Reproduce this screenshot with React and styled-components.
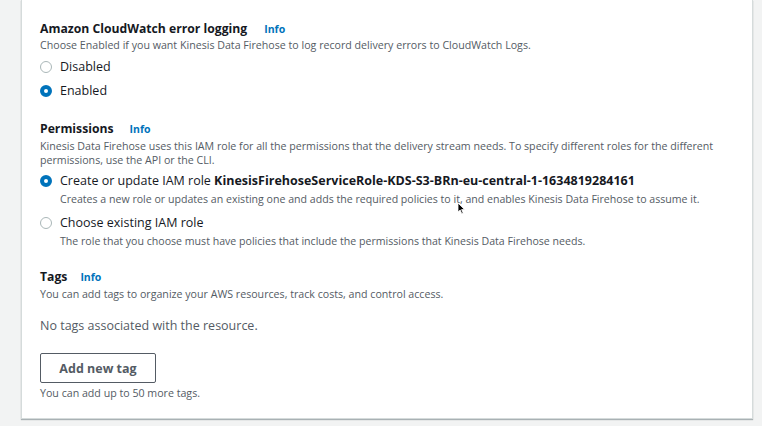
import React from 'react'
import styled, { createGlobalStyle } from 'styled-components'

const GlobalStyle = createGlobalStyle`
  html, body {
    margin: 0;
    padding: 0;
    background: #f2f3f3;
    font-family: "Open Sans", "Noto Sans", sans-serif;
    -webkit-font-smoothing: antialiased;
  }
`

const Page = styled.div`
  width: 762px;
  height: 426px;
  overflow: hidden;
  padding: 0 9px 0 21px;
  box-sizing: border-box;
  position: relative;
`

const Card = styled.div`
  background: #fff;
  border: 1px solid #d5dbdb;
  border-top: none;
  box-shadow: 0 1px 1px 0 rgba(0, 28, 36, 0.3);
  padding: 21px 18px 18px 18px;
  display: flex;
  flex-direction: column;
`

const Section = styled.section`
  display: flex;
  flex-direction: column;
  margin-top: ${p => p.$top || 0}px;
`

const Heading = styled.div`
  display: flex;
  align-items: baseline;
  font-size: 12.2px;
  line-height: 16px;
  font-weight: 700;
  color: #16191f;
`

const Info = styled.span`
  font-size: 10.5px;
  font-weight: 700;
  color: #0073bb;
  margin-left: ${p => p.$gap || 16}px;
`

const Description = styled.p`
  margin: ${p => p.$top || 1}px 0 0 0;
  font-size: 10.65px;
  line-height: 14px;
  color: #545b64;
`

const RadioGroup = styled.div`
  display: flex;
  flex-direction: column;
  gap: ${p => p.$gap || 3}px;
  margin-top: 5px;
`

const RadioRow = styled.label`
  display: grid;
  grid-template-columns: 12px 1fr;
  column-gap: 8px;
  align-items: center;
`

const Dot = styled.span`
  width: 12px;
  height: 12px;
  box-sizing: border-box;
  border-radius: 50%;
  background: #fff;
  border: ${p => (p.$checked ? '4px solid #0073bb' : '1px solid #aab7b8')};
`

const RadioLabel = styled.span`
  font-size: 12.5px;
  line-height: ${p => p.$lh || 20}px;
  color: #16191f;

  b {
    font-weight: 700;
  }
`

const RadioSub = styled.span`
  grid-column: 2;
  font-size: 10.6px;
  line-height: 14px;
  color: #545b64;
  margin-top: 2px;
`

const Empty = styled.p`
  margin: 16px 0 0 0;
  font-size: 12.5px;
  line-height: 18px;
  color: #545b64;
`

const Button = styled.button`
  align-self: flex-start;
  margin-top: 18px;
  width: 116px;
  height: 30px;
  background: #fff;
  border: 1px solid #545b64;
  border-radius: 2px;
  font-family: inherit;
  font-size: 12.5px;
  font-weight: 700;
  color: #545b64;
  padding: 0;
`

const Note = styled.p`
  margin: 3px 0 0 0;
  font-size: 10.65px;
  line-height: 14px;
  color: #545b64;
`

const Cursor = styled.svg`
  position: absolute;
  left: 457px;
  top: 202px;
`

const Radio = ({ checked, label, sub, lh }) => (
  <RadioRow>
    <Dot $checked={checked} />
    <RadioLabel $lh={lh}>{label}</RadioLabel>
    {sub && <RadioSub>{sub}</RadioSub>}
  </RadioRow>
)

export default function App() {
  return (
    <>
      <GlobalStyle />
      <Page>
        <Card>
          <Section>
            <Heading>
              Amazon CloudWatch error logging
              <Info $gap={17}>Info</Info>
            </Heading>
            <Description>
              Choose Enabled if you want Kinesis Data Firehose to log record delivery errors to CloudWatch Logs.
            </Description>
            <RadioGroup $gap={4}>
              <Radio label="Disabled" />
              <Radio checked label="Enabled" />
            </RadioGroup>
          </Section>

          <Section $top={20}>
            <Heading>
              Permissions
              <Info $gap={16}>Info</Info>
            </Heading>
            <Description $top={2}>
              Kinesis Data Firehose uses this IAM role for all the permissions that the delivery stream needs. To specify different roles for the different permissions, use the API or the CLI.
            </Description>
            <RadioGroup $gap={8}>
              <Radio
                checked
                lh={18}
                label={<>Create or update IAM role <b>KinesisFirehoseServiceRole-KDS-S3-BRn-eu-central-1-1634819284161</b></>}
                sub="Creates a new role or updates an existing one and adds the required policies to it, and enables Kinesis Data Firehose to assume it."
              />
              <Radio
                lh={18}
                label="Choose existing IAM role"
                sub="The role that you choose must have policies that include the permissions that Kinesis Data Firehose needs."
              />
            </RadioGroup>
          </Section>

          <Section $top={21}>
            <Heading>
              Tags
              <Info $gap={13}>Info</Info>
            </Heading>
            <Description $top={2}>
              You can add tags to organize your AWS resources, track costs, and control access.
            </Description>
            <Empty>No tags associated with the resource.</Empty>
            <Button>Add new tag</Button>
            <Note>You can add up to 50 more tags.</Note>
          </Section>
        </Card>
        <Cursor width="9" height="13" viewBox="0 0 9 13">
          <path d="M1 1 L1 10 L3.2 8 L4.8 11.8 L6.2 11.2 L4.6 7.6 L7.6 7.6 Z" fill="#000" stroke="#fff" strokeWidth="0.8" />
        </Cursor>
      </Page>
    </>
  )
}
